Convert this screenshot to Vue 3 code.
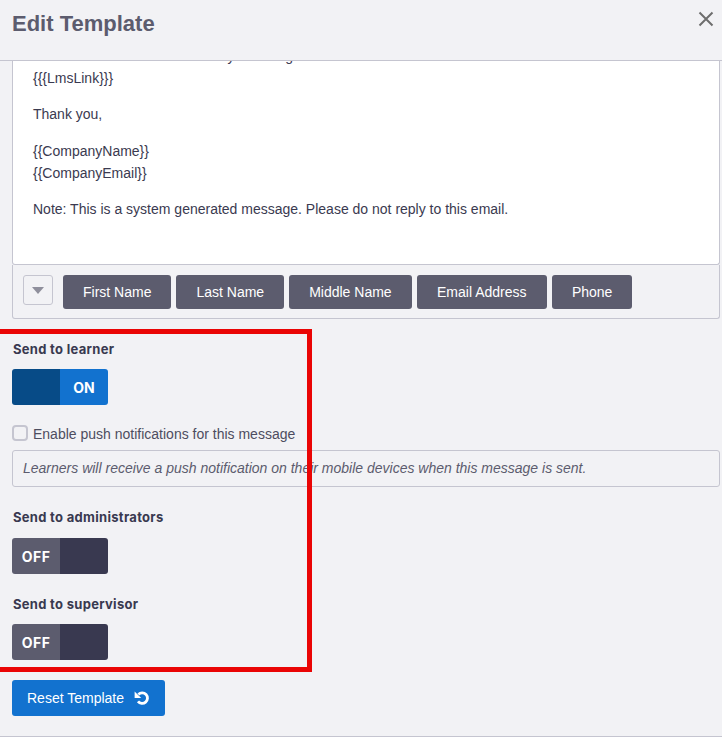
<script setup>
const tags = ['First Name', 'Last Name', 'Middle Name', 'Email Address', 'Phone']
const lms = '{' + '{{LmsLink}}' + '}'
const company = '{' + '{CompanyName}' + '}'
const email = '{' + '{CompanyEmail}' + '}'
</script>

<template>
  <div class="modal">
    <header class="head">
      <h1>Edit Template</h1>
      <svg class="close" width="16" height="16" viewBox="0 0 16 16" aria-label="Close">
        <path d="M1.5 1.5 14.5 14.5M14.5 1.5 1.5 14.5" stroke="#6e6e6e" stroke-width="2" fill="none" />
      </svg>
    </header>

    <main class="body">
      <section class="editor">
        <div class="doc">
          <p>Learners can view the course by following the link below:<br />{{ lms }}</p>
          <p>Thank you,</p>
          <p>{{ company }}<br />{{ email }}</p>
          <p>Note: This is a system generated message. Please do not reply to this email.</p>
        </div>
      </section>
      <div class="tools">
        <button class="drop" aria-label="More">
          <svg width="12" height="7" viewBox="0 0 12 7"><path d="M0 0h12L6 7z" fill="#8f8f9c" /></svg>
        </button>
        <button v-for="t in tags" :key="t" class="tag">{{ t }}</button>
      </div>

      <h2 class="label first">Send to learner</h2>
      <div class="toggle on"><span class="knob"></span><span class="txt">ON</span></div>

      <label class="check"><span class="box"></span>Enable push notifications for this message</label>
      <div class="note">Learners will receive a push notification on their mobile devices when this message is sent.</div>

      <h2 class="label admin">Send to administrators</h2>
      <div class="toggle off"><span class="txt">OFF</span><span class="knob"></span></div>

      <h2 class="label sup">Send to supervisor</h2>
      <div class="toggle off"><span class="txt">OFF</span><span class="knob"></span></div>

      <button class="reset">
        Reset Template
        <svg width="16" height="16" viewBox="0 0 16 16">
          <path d="M4.4 4.4A5.3 5.3 0 1 1 4 11.4" fill="none" stroke="#fff" stroke-width="2.8" />
          <path d="M0.6 1.4V8H7.2z" fill="#fff" />
        </svg>
      </button>
    </main>

    <div class="mark"></div>
  </div>
</template>

<style>
html, body { margin: 0; background: #f2f2f5; }
</style>

<style scoped>
.modal {
  position: relative;
  width: 722px;
  height: 737px;
  box-sizing: border-box;
  background: #f2f2f5;
  border-bottom: 1px solid #c5c5d0;
  padding-bottom: 1px;
  overflow: hidden;
  font-family: "Liberation Sans", Arial, sans-serif;
  font-size: 14px;
  color: #3a3a50;
}
.head {
  height: 60px;
  border-bottom: 1px solid #c5c5d0;
  display: flex;
  justify-content: space-between;
  align-items: flex-start;
  padding: 0 8px 0 12px;
}
.head h1 {
  margin: 11px 0 0;
  font-size: 22px;
  line-height: 26px;
  font-weight: 700;
  color: #5c5c6e;
}
.close { margin-top: 11px; }
.body { padding: 0 2px 0 12px; }
.editor {
  height: 203px;
  background: #fff;
  border: 1px solid #c5c5d0;
  border-top: 0;
  border-radius: 0 0 3px 3px;
  overflow: hidden;
}
.doc { padding: 0 20px; margin-top: -16px; line-height: 22px; }
.doc p { margin: 0 0 14.4px; }
.tools {
  height: 54px;
  box-sizing: border-box;
  border: 1px solid #c5c5d0;
  border-top: 0;
  border-radius: 0 0 3px 3px;
  padding: 10px 10px 0;
  display: flex;
  align-items: flex-start;
  gap: 5px;
}
button { font-family: inherit; cursor: pointer; }
.drop {
  width: 30px;
  height: 30px;
  margin-right: 5px;
  padding: 0;
  background: #f2f2f5;
  border: 1px solid #c5c5d0;
  border-radius: 3px;
  display: flex;
  align-items: center;
  justify-content: center;
}
.tag {
  height: 34px;
  padding: 0 20px;
  border: 0;
  border-radius: 3px;
  background: #5c5c6e;
  color: #fff;
  font-size: 14px;
}
.tag:nth-child(5) { padding: 0 20.4px; }
.label {
  margin: 0;
  font-family: Inter, sans-serif;
  font-size: 13px;
  line-height: 18px;
  font-weight: 700;
  letter-spacing: 0.3px;
  color: #393950;
  padding-left: 1px;
}
.label.first { margin-top: 21px; margin-bottom: 11px; }
.label.admin { margin-top: 21px; margin-bottom: 12px; }
.label.sup { margin-top: 21px; margin-bottom: 11px; }
.toggle {
  width: 96px;
  height: 36px;
  display: flex;
  border-radius: 3px;
  overflow: hidden;
  font-family: Inter, sans-serif;
  font-size: 14px;
  font-weight: 700;
  color: #fff;
}
.toggle > span { width: 48px; display: flex; align-items: center; justify-content: center; }
.on .knob { background: #074b87; }
.on .txt { background: #1272cf; }
.off { letter-spacing: 0.5px; }
.off .knob { background: #393950; }
.off .txt { background: #5c5c6e; }
.check {
  display: flex;
  align-items: center;
  gap: 5px;
  margin-top: 20px;
  height: 18px;
  color: #4d4d60;
}
.box {
  flex: none;
  box-sizing: border-box;
  width: 16px;
  height: 16px;
  margin-bottom: 2px;
  border: 2px solid #c5c5d0;
  border-radius: 4px;
  background: #f2f2f5;
}
.note {
  margin-top: 7px;
  height: 37px;
  box-sizing: border-box;
  border: 1px solid #c5c5d0;
  border-radius: 3px;
  padding: 0 10px;
  line-height: 35px;
  font-style: italic;
  color: #5c5c6e;
}
.reset {
  margin-top: 20px;
  height: 36px;
  width: 153px;
  padding: 0;
  border: 0;
  border-radius: 3px;
  background: #1272cf;
  color: #fff;
  font-size: 14px;
  display: flex;
  align-items: center;
  justify-content: center;
  gap: 10px;
}
.mark {
  position: absolute;
  left: -5px;
  top: 329px;
  width: 307px;
  height: 333px;
  border: 5px solid #ea0505;
}
</style>
